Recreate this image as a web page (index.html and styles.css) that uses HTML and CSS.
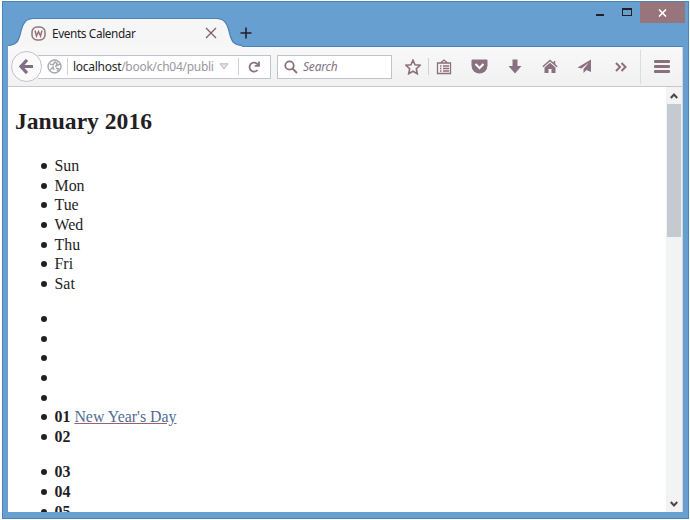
FILE: index.html
```html
<!DOCTYPE html>
<html lang="en">
<head>
<meta charset="utf-8">
<title>Events Calendar</title>
<link rel="stylesheet" href="styles.css">
</head>
<body>
<div class="window">
  <header class="titlebar">
    <div class="tab">
      <svg class="curve left" width="25" height="29" viewBox="0 0 25 29"><path class="fill" d="M0 29V27.500C8 27 10 24 12 17C14 8 16 1 25 .5V29z"/><path class="edge" d="M0 27.500C8 27 10 24 12 17C14 8 16 1 25 .5"/></svg>
      <div class="tab-body">
        <svg class="favicon" width="15" height="15" viewBox="0 0 15 15"><rect x="1" y="1" width="13" height="13" rx="5"/><path d="M4 4.500l1.500 5.500 2-4.500 2 4.500L11 4.500"/></svg>
        <span class="tab-title">Events Calendar</span>
        <svg class="close" width="12" height="12" viewBox="0 0 12 12"><path d="M1 1l10 10M11 1L1 11"/></svg>
      </div>
      <svg class="curve right" width="25" height="29" viewBox="0 0 25 29"><path class="fill" d="M25 29V27.500C17 27 15 24 13 17C11 8 9 1 0 .5V29z"/><path class="edge" d="M25 27.500C17 27 15 24 13 17C11 8 9 1 0 .5"/></svg>
    </div>
    <svg class="new-tab" width="12" height="12" viewBox="0 0 12 12"><path d="M6 .5v11M.5 6h11"/></svg>
    <div class="controls">
      <span class="minimize"></span>
      <span class="maximize"></span>
      <span class="quit"><svg width="9" height="8" viewBox="0 0 9 8"><path d="M1 .5l7 7M8 .5l-7 7"/></svg></span>
    </div>
  </header>

  <nav class="toolbar">
    <span class="back"><svg width="15" height="15" viewBox="0 0 15 15"><path d="M8 1L2 7.500l6 6.500M2.500 7.500H14"/></svg></span>
    <div class="address">
      <svg class="globe" width="15" height="15" viewBox="0 0 15 15"><circle cx="7.500" cy="7.500" r="6.500"/><path d="M3 5l3 1 2-3 2 1-1 3 4-2M3 11l3-3 1 3M9 9l3 1-2 2"/></svg>
      <i class="rule"></i>
      <span class="url"><b>localhost</b>/book/ch04/publi</span>
      <svg class="drop" width="10" height="7" viewBox="0 0 10 7"><path d="M.8.8h8.400L5 6z"/></svg>
      <i class="rule"></i>
      <svg class="reload" width="12" height="12" viewBox="0 0 12 12"><path d="M9.500 9A4.500 4.500 0 1 1 9 2.700L10.500 4.500M11 .5v4.300H6.800"/></svg>
    </div>
    <div class="search">
      <svg width="14" height="14" viewBox="0 0 14 14"><circle cx="5.500" cy="5.500" r="4.200"/><path d="M8.500 8.500l4.500 4.500"/></svg>
      <span>Search</span>
    </div>
    <div class="actions">
      <svg class="star line" width="16" height="16" viewBox="0 0 16 16"><path d="M8 1.200l2 4.600 5 .5-3.700 3.400 1 5L8 12.200l-4.300 2.500 1-5L1 6.300l5-.5z"/></svg>
      <i class="rule"></i>
      <svg class="clip line" width="16" height="16" viewBox="0 0 16 16"><path d="M1.500 4h13v10.500h-13zM5 3.500L8 1l3 2.500M4 7h1.500M7 7h6M4 9.500h1.500M7 9.500h6M4 12h1.500M7 12h6"/></svg>
      <svg class="pocket" width="17" height="15" viewBox="0 0 17 15"><path class="solid" d="M1.500 .5h14q1 0 1 1v5a8 8 0 0 1-16 0v-5q0-1 1-1z"/><path class="check" d="M4.500 5l4 4 4-4"/></svg>
      <svg class="down" width="14" height="15" viewBox="0 0 14 15"><path class="solid" d="M4.500 .5h5V7h4L7 14.500.5 7h4z"/></svg>
      <svg class="home" width="16" height="15" viewBox="0 0 16 15"><path class="solid" d="M8 3.800l5.500 4.700v5.500H9.500V10h-3v4h-4V8.500z"/><path class="roof" d="M.8 7.700L8 1.400l7.200 6.300M12.500 2v3"/></svg>
      <svg class="plane" width="15" height="15" viewBox="0 0 15 15"><path class="solid" d="M14 .5v12.500l-4.500-2-3 3V10L12 3.500 4.500 9.500 .5 8.500z"/></svg>
      <svg class="more" width="12" height="10" viewBox="0 0 12 10"><path d="M1 1l4 4-4 4M6.500 1l4 4-4 4"/></svg>
    </div>
    <div class="menu"><i></i><i></i><i></i></div>
  </nav>

  <div class="viewport">
    <main class="page">
      <h2>January 2016</h2>
      <ul><li>Sun</li><li>Mon</li><li>Tue</li><li>Wed</li><li>Thu</li><li>Fri</li><li>Sat</li></ul>
      <ul><li></li><li></li><li></li><li></li><li></li><li><strong>01</strong> <a href="#">New Year's Day</a></li><li><strong>02</strong></li></ul>
      <ul><li><strong>03</strong></li><li><strong>04</strong></li><li><strong>05</strong></li></ul>
    </main>
    <div class="scrollbar">
      <svg width="8" height="6" viewBox="0 0 8 6"><path d="M.8 5L4 1.500 7.200 5"/></svg>
      <span class="thumb"></span>
      <svg class="bottom" width="8" height="6" viewBox="0 0 8 6"><path d="M.8 1L4 4.500 7.200 1"/></svg>
    </div>
  </div>
</div>
</body>
</html>
```

FILE: styles.css
```css
* { box-sizing: border-box; }
body { margin: 0; width: 690px; height: 520px; overflow: hidden; background: #fff; }
svg { display: block; flex: none; fill: none; }
.window {
  width: 687px; height: 518px; margin: 1px 0 0 2px; padding: 0 5px 6px;
  border: 1px solid #4d82b4; background: #669fd0;
  display: flex; flex-direction: column;
}
.titlebar { height: 45px; flex: none; display: flex; align-items: flex-start; border-bottom: 1px solid #4d82b4; }
.tab { display: flex; margin: 16px 0 0 0; height: 29px; position: relative; }
.tab-body { width: 184px; background: #f6f6f7; border-top: 1px solid #4d82b4; display: flex; align-items: center; }
.curve .fill { fill: #f6f6f7; }
.curve .edge { stroke: #4d82b4; stroke-width: 1.2; }
.favicon { margin-left: -2px; stroke: #98747c; stroke-width: 1.5; }
.tab-title { margin-left: 6px; width: 157px; font: 11.800px/16px "Noto Sans", sans-serif; letter-spacing: -.38px; color: #241e29; }
.close { stroke: #806067; stroke-width: 1.3; }
.new-tab { margin: 25px 0 0 -2px; stroke: #241e29; stroke-width: 1.6; }
.controls { margin-left: auto; display: flex; height: 21px; }
.minimize { width: 8px; height: 2px; margin: 12px 18px 0 0; background: #241e29; }
.maximize { width: 10px; height: 8px; margin: 6px 8px 0 0; border: 1px solid #241e29; border-top-width: 2px; }
.quit { width: 45px; height: 21px; display: flex; align-items: center; justify-content: center; background: #98747c; margin-right: -2px; }
.quit svg { stroke: #fff; stroke-width: 1.6; }

.toolbar {
  height: 40px; flex: none; display: flex; align-items: center;
  background: linear-gradient(#f8f8f9, #f1f1f2); border-bottom: 1px solid #c5c9cd; border-right: 1px solid #d3d7db;
}
.rule { width: 1px; height: 17px; background: #cdd0d4; flex: none; }
.back {
  width: 31px; height: 31px; margin-left: 3px; border: 1px solid #bfc4ca; border-radius: 50%; background: #fafafa;
  display: flex; align-items: center; justify-content: center; position: relative; flex: none;
}
.back svg { stroke: #806f86; stroke-width: 3.200; }
.address {
  width: 233px; height: 24px; margin-left: -4px; padding-left: 9px; display: flex; align-items: center;
  background: #fff; border: 1px solid #bfc4cc; border-left: 0;
}
.globe { stroke: #a6a7ae; stroke-width: 1.4; margin-right: 5px; }
.url { width: 146px; margin-left: 5px; color: #9a97a0; font: 12px/16px "Noto Sans", sans-serif; letter-spacing: -.28px; white-space: nowrap; }
.url b { font-weight: normal; color: #241e29; }
.drop { stroke: #b9bdc6; stroke-width: 1; fill: #e1e3e7; margin-right: 9px; }
.reload { stroke: #8a7380; stroke-width: 1.800; margin-left: 9px; }
.search {
  width: 115px; height: 24px; margin-left: 6px; padding-left: 6px; display: flex; align-items: center;
  background: #fff; border: 1px solid #bfc4cc; font: italic 12px/16px "Noto Sans", sans-serif; letter-spacing: -.2px; color: #817482;
}
.search svg { stroke: #8a7078; stroke-width: 1.800; margin-right: 5px; }
.actions { display: flex; align-items: center; margin-left: 13px; }
.line, .more { stroke: #8c6f78; stroke-width: 1.600; }
.solid { fill: #8a7180; }
.clip { stroke-width: 1.300; margin-left: 7px; }
.pocket { margin-left: 19px; }
.check { stroke: #fff; stroke-width: 2; }
.actions .rule { margin-left: 7px; }
.down { margin-left: 20px; }
.home { margin-left: 20px; }
.roof { stroke: #8a7180; stroke-width: 1.500; }
.plane { margin-left: 19px; }
.more { margin-left: 23px; stroke-width: 2; }
.menu { margin-left: auto; width: 42px; height: 34px; padding: 10px 0 0 13px; border-left: 1px solid #dcdcdf; }
.menu i { display: block; width: 16px; height: 3px; margin-bottom: 2px; border-radius: 1px; background: #8a707b; }

.viewport { flex: 1; min-height: 0; display: flex; background: #fff; border-right: 1px solid #d3d7db; overflow: hidden; }
.page { flex: 1; padding: 20px 7px 0; overflow: hidden; font: 15.900px/19.650px "Liberation Serif", serif; color: #241e24; }
.page h2 { margin: 0 0 21px; font-size: 23.600px; line-height: 28px; }
.page ul { margin: 0 0 15.700px; padding-left: 39.500px; list-style: none; }
.page li { height: 19.650px; }
.page li::before {
  content: ""; display: inline-block; width: 6px; height: 6px; margin: 0 8px 2px -14px;
  border-radius: 50%; background: #241e24;
}
.page a { color: #526c93; text-decoration-color: #9c626c; }
.scrollbar { width: 16px; flex: none; background: #f2f3f4; display: flex; flex-direction: column; align-items: center; padding: 6px 0 5px; }
.scrollbar svg { stroke: #53424e; stroke-width: 2; }
.thumb { width: 14px; height: 133px; margin-top: 5px; background: #c5cad1; }
.bottom { margin-top: auto; }
```
